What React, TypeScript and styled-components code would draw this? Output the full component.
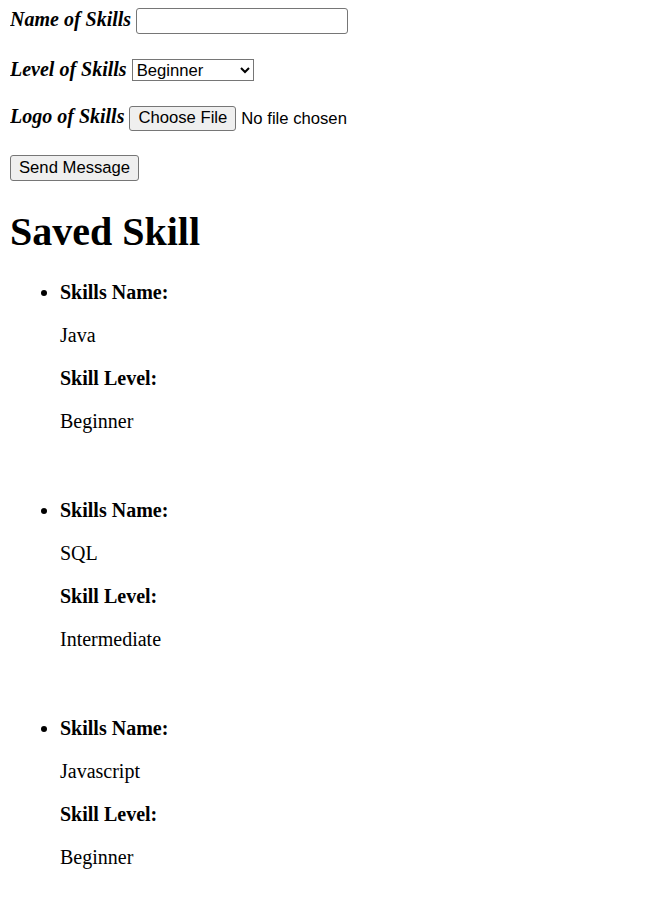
import React from "react";
import styled, { createGlobalStyle } from "styled-components";

interface ISkill {
  name: string;
  level: string;
}

const skills: ISkill[] = [
  { name: "Java", level: "Beginner" },
  { name: "SQL", level: "Intermediate" },
  { name: "Javascript", level: "Beginner" },
];

const App: React.FC = () => {
  return (
    <>
      <GlobalStyle />
      <Form onSubmit={(e) => e.preventDefault()}>
        <FieldRow>
          <FieldLabel htmlFor="skill-name">Name of Skills</FieldLabel>{" "}
          <TextInput id="skill-name" type="text" />
        </FieldRow>
        <FieldRow>
          <FieldLabel htmlFor="skill-level">Level of Skills</FieldLabel>{" "}
          <LevelSelect id="skill-level" defaultValue="Beginner">
            <option>Beginner</option>
            <option>Intermediate</option>
            <option>Advanced</option>
          </LevelSelect>
        </FieldRow>
        <FieldRow>
          <FieldLabel htmlFor="skill-logo">Logo of Skills</FieldLabel>{" "}
          <FileInput id="skill-logo" type="file" />
        </FieldRow>
        <FieldRow>
          <SubmitButton type="submit">Send Message</SubmitButton>
        </FieldRow>
      </Form>
      <Heading>Saved Skill</Heading>
      {skills.map((skill) => (
        <SkillList key={skill.name}>
          <SkillItem>
            <SkillField>
              <strong>Skills Name:</strong>
            </SkillField>
            <SkillField>{skill.name}</SkillField>
            <SkillField>
              <strong>Skill Level:</strong>
            </SkillField>
            <SkillField>{skill.level}</SkillField>
          </SkillItem>
          <br />
        </SkillList>
      ))}
    </>
  );
};

export default App;

const GlobalStyle = createGlobalStyle`
  body {
    margin: 8px 10px 10px;
    font-family: "Liberation Serif", "Times New Roman", serif;
    font-size: 20px;
    color: #000;
    background: #fff;
  }
`;

const Form = styled.form`
  margin: 0;
`;

const FieldRow = styled.p`
  margin: 0 0 24px;
`;

const FieldLabel = styled.label`
  font-weight: bold;
  font-style: italic;
`;

const controlFont = `
  font-family: "Liberation Sans", Arial, sans-serif;
  font-size: 16.67px;
  color: #000;
`;

const TextInput = styled.input`
  ${controlFont}
  box-sizing: border-box;
  width: 212px;
  height: 26px;
  padding: 1px 3px;
  border: 1px solid #767676;
  border-radius: 3px;
  background: #fff;
`;

const LevelSelect = styled.select`
  ${controlFont}
  box-sizing: border-box;
  width: 122px;
  height: 22px;
  border: 1px solid #767676;
  border-radius: 0;
  background: #fff;
`;

const FileInput = styled.input`
  ${controlFont}

  &::file-selector-button {
    ${controlFont}
    box-sizing: border-box;
    height: 25px;
    padding: 1px 8px;
    margin-right: 5px;
    border: 1px solid #767676;
    border-radius: 3px;
    background: #efefef;
  }
`;

const SubmitButton = styled.button`
  ${controlFont}
  box-sizing: border-box;
  height: 26px;
  padding: 1px 8px;
  border: 1px solid #767676;
  border-radius: 3px;
  background: #efefef;
`;

const Heading = styled.h1`
  font-size: 40px;
  margin: 27px 0 26px;
`;

const SkillList = styled.ul`
  margin: 23px 0;
  padding-left: 50px;
`;

const SkillItem = styled.li`
  list-style: disc;
`;

const SkillField = styled.p`
  margin: 20px 0;
`;
